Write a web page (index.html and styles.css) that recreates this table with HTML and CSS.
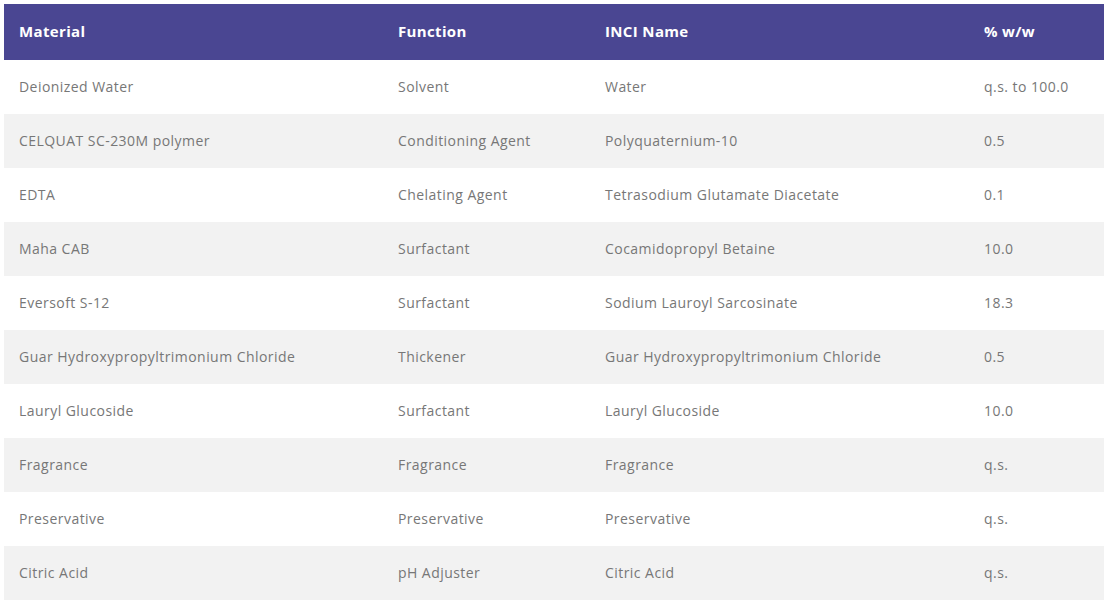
FILE: index.html
```html
<!DOCTYPE html>
<html>
<head>
<meta charset="utf-8">
<link rel="stylesheet" href="styles.css">
</head>
<body>
<table class="formula">
  <colgroup>
    <col class="c1"><col class="c2"><col class="c3"><col class="c4">
  </colgroup>
  <thead>
    <tr><th>Material</th><th>Function</th><th>INCI Name</th><th>% w/w</th></tr>
  </thead>
  <tbody>
    <tr><td>Deionized Water</td><td>Solvent</td><td>Water</td><td>q.s. to 100.0</td></tr>
    <tr><td>CELQUAT SC-230M polymer</td><td>Conditioning Agent</td><td>Polyquaternium-10</td><td>0.5</td></tr>
    <tr><td>EDTA</td><td>Chelating Agent</td><td>Tetrasodium Glutamate Diacetate</td><td>0.1</td></tr>
    <tr><td>Maha CAB</td><td>Surfactant</td><td>Cocamidopropyl Betaine</td><td>10.0</td></tr>
    <tr><td>Eversoft S-12</td><td>Surfactant</td><td>Sodium Lauroyl Sarcosinate</td><td>18.3</td></tr>
    <tr><td>Guar Hydroxypropyltrimonium Chloride</td><td>Thickener</td><td>Guar Hydroxypropyltrimonium Chloride</td><td>0.5</td></tr>
    <tr><td>Lauryl Glucoside</td><td>Surfactant</td><td>Lauryl Glucoside</td><td>10.0</td></tr>
    <tr><td>Fragrance</td><td>Fragrance</td><td>Fragrance</td><td>q.s.</td></tr>
    <tr><td>Preservative</td><td>Preservative</td><td>Preservative</td><td>q.s.</td></tr>
    <tr><td>Citric Acid</td><td>pH Adjuster</td><td>Citric Acid</td><td>q.s.</td></tr>
  </tbody>
</table>
</body>
</html>
```

FILE: styles.css
```css
html, body {
  margin: 0;
  padding: 0;
  background: #ffffff;
}
body {
  padding: 4px;
  font-family: "Open Sans", "Liberation Sans", sans-serif;
}
.formula {
  width: 1100px;
  border-collapse: collapse;
  table-layout: fixed;
}
.c1 { width: 379px; }
.c2 { width: 207px; }
.c3 { width: 379px; }
.c4 { width: 135px; }
.formula th {
  background: #4a4692;
  color: #ffffff;
  font-weight: 700;
  font-size: 15px;
  letter-spacing: 0.35px;
  text-align: left;
  height: 56px;
  padding: 0 0 2px 15px;
  box-sizing: border-box;
}
.formula td {
  color: #777777;
  font-size: 14px;
  letter-spacing: 0.45px;
  height: 54px;
  padding: 0 0 2px 15px;
  box-sizing: border-box;
  white-space: nowrap;
}
.formula tbody tr:nth-child(even) td {
  background: #f2f2f2;
}
```
